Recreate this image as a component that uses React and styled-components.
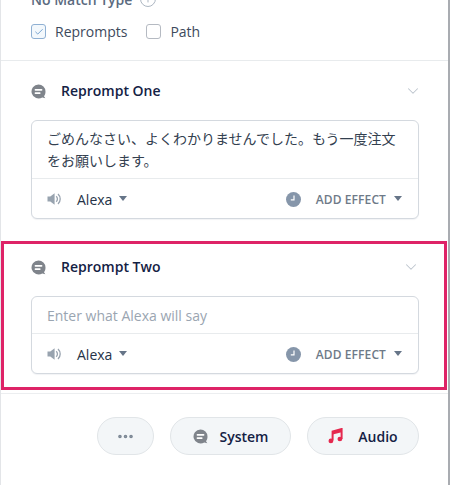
import styled, { createGlobalStyle } from 'styled-components';
import { Info, Check, ChevronDown, MoreHorizontal } from 'lucide-react';

const GlobalStyle = createGlobalStyle`
  html, body {
    margin: 0;
    padding: 0;
    background: #fff;
  }
  * {
    box-sizing: border-box;
  }
`;

const Panel = styled.div`
  width: 450px;
  height: 485px;
  overflow: hidden;
  background: #fff;
  border-left: 1px solid #e3e5e8;
  border-right: 2px solid #a9acb1;
  font-family: 'Open Sans', 'Noto Sans CJK JP', sans-serif;
  color: #132144;
`;

const TypeSection = styled.section`
  height: 62px;
  margin-top: -1px;
  padding: 0 0 0 30px;
  border-bottom: 1px solid #e8ebed;
  overflow: hidden;
`;

const TypeLabel = styled.div`
  display: flex;
  align-items: center;
  gap: 7px;
  height: 16px;
  margin-top: -8px;
  font-size: 14px;
  font-weight: 600;
  color: #5b6b7f;
  svg {
    color: #aab4bf;
  }
`;

const TypeRow = styled.div`
  display: flex;
  align-items: center;
  margin-top: 15px;
`;

const CheckOption = styled.label`
  display: flex;
  align-items: center;
  gap: 9px;
  margin-right: 19px;
  font-size: 14px;
  color: #3d4a5c;
`;

const CheckBox = styled.span`
  display: flex;
  align-items: center;
  justify-content: center;
  width: 15px;
  height: 15px;
  border-radius: 3px;
  border: 1px solid ${(p) => (p.$checked ? '#8fb0d3' : '#b5bac2')};
  background: ${(p) => (p.$checked ? '#f3f8fc' : '#fff')};
  color: #5d93c9;
`;

const Section = styled.section`
  height: ${(p) => (p.$highlight ? '149px' : '180px')};
  margin-right: ${(p) => (p.$highlight ? '1px' : '0')};
  padding: ${(p) => (p.$highlight ? '9px 27px 0 27px' : '16px 29px 0 30px')};
  border: ${(p) => (p.$highlight ? '3px solid #de2367' : 'none')};
`;

const SectionHeader = styled.div`
  display: flex;
  align-items: center;
  height: 28px;
  margin-bottom: 15px;
`;

const SectionTitle = styled.h3`
  flex: 1;
  margin: -1px 0 0 15px;
  font-size: 14px;
  font-weight: 600;
  color: #132144;
`;

const Chevron = styled(ChevronDown)`
  color: #bcc4cd;
  margin-right: -3px;
`;

const Card = styled.div`
  width: 388px;
  border: 1px solid #d4d9df;
  border-radius: 6px;
  background: #fff;
  box-shadow: 0 1px 1px rgba(30, 50, 80, 0.06);
`;

const CardText = styled.div`
  padding: ${(p) => (p.$placeholder ? '10px 15px 9px' : '7px 15px 4px')};
  height: ${(p) => (p.$placeholder ? '36px' : '57px')};
  font-size: 14px;
  line-height: ${(p) => (p.$placeholder ? '17px' : '22px')};
  color: ${(p) => (p.$placeholder ? '#9aa5b1' : '#33404f')};
`;

const CardFooter = styled.div`
  display: flex;
  align-items: center;
  height: 40px;
  padding: 1px 16px 0 15px;
  border-top: 1px solid #e8ebed;
`;

const VoiceName = styled.span`
  margin-left: 15px;
  font-size: 14px;
  color: #253247;
`;

const Caret = styled.span`
  width: 0;
  height: 0;
  margin-left: ${(p) => p.$gap || 7}px;
  margin-top: -2px;
  border-left: 4.5px solid transparent;
  border-right: 4.5px solid transparent;
  border-top: 5px solid #667588;
`;

const EffectGroup = styled.div`
  display: flex;
  align-items: center;
  margin-left: auto;
`;

const EffectLabel = styled.span`
  margin-left: 15px;
  font-size: 12px;
  font-weight: 600;
  letter-spacing: 0.1px;
  color: #6e7a88;
`;

const ButtonBar = styled.div`
  display: flex;
  justify-content: flex-end;
  gap: 16px;
  padding: 23px 29px 0 0;
  border-top: 1px solid #eceef0;
  margin-top: 3px;
`;

const PillButton = styled.button`
  display: flex;
  align-items: center;
  justify-content: center;
  gap: ${(p) => (p.$gap ? `${p.$gap}px` : '0')};
  width: ${(p) => p.$width}px;
  height: 38px;
  padding: 0;
  border: 1px solid #e1e5e8;
  border-radius: 20px;
  background: #f3f6f8;
  font-family: inherit;
  font-size: 14px;
  font-weight: 600;
  color: #132144;
  svg.dots {
    color: #7b8794;
  }
`;

function BubbleIcon() {
  return (
    <svg width="15" height="15" viewBox="0 0 15 15">
      <path
        d="M7.5 0.5a7 7 0 0 1 7 7c0 2-.6 3.6-1.5 4.8l1.3 2-3-.9A7 7 0 1 1 7.5 .5z"
        fill="#7f848b"
      />
      <rect x="3.6" y="5" width="7.8" height="1.8" rx=".8" fill="#fff" />
      <rect x="3.6" y="8.3" width="6" height="1.8" rx=".8" fill="#fff" />
    </svg>
  );
}

function SpeakerIcon() {
  return (
    <svg width="15" height="14" viewBox="0 0 15 14">
      <path d="M0.5 4.4h2.8L7.6 1.2v11.6L3.3 9.6H0.5z" fill="#98a3af" />
      <path d="M9.2 4.2a3.8 3.8 0 0 1 0 5.6" stroke="#98a3af" strokeWidth="1.3" fill="none" />
      <path d="M11 2a6.8 6.8 0 0 1 0 10" stroke="#98a3af" strokeWidth="1.3" fill="none" />
    </svg>
  );
}

function ClockIcon() {
  return (
    <svg width="15" height="15" viewBox="0 0 15 15">
      <circle cx="7.5" cy="7.5" r="7.5" fill="#8696aa" />
      <path d="M8 3.4v4.4H4.8" stroke="#fff" strokeWidth="1.2" fill="none" />
    </svg>
  );
}

function NoteIcon() {
  return (
    <svg width="15" height="16" viewBox="0 0 15 16">
      <path
        d="M4.6 12.6V3.4L13.6 1v10"
        stroke="#e5294f"
        strokeWidth="2"
        fill="none"
      />
      <path d="M4.6 3.4L13.6 1v3.2L4.6 6.4z" fill="#e5294f" />
      <ellipse cx="2.9" cy="12.9" rx="2.4" ry="2.3" fill="#e5294f" />
      <ellipse cx="11.9" cy="11" rx="2.4" ry="2.3" fill="#e5294f" />
    </svg>
  );
}

function RepromptCard({ text, placeholder }) {
  return (
    <Card>
      <CardText $placeholder={!text}>{text || placeholder}</CardText>
      <CardFooter>
        <SpeakerIcon />
        <VoiceName>Alexa</VoiceName>
        <Caret />
        <EffectGroup>
          <ClockIcon />
          <EffectLabel>ADD EFFECT</EffectLabel>
          <Caret $gap={8} />
        </EffectGroup>
      </CardFooter>
    </Card>
  );
}

export default function App() {
  return (
    <>
      <GlobalStyle />
      <Panel>
        <TypeSection>
          <TypeLabel>
            No Match Type
            <Info size={18} strokeWidth={1.3} />
          </TypeLabel>
          <TypeRow>
            <CheckOption>
              <CheckBox $checked>
                <Check size={10} strokeWidth={2} />
              </CheckBox>
              Reprompts
            </CheckOption>
            <CheckOption>
              <CheckBox />
              Path
            </CheckOption>
          </TypeRow>
        </TypeSection>
        <Section>
          <SectionHeader>
            <BubbleIcon />
            <SectionTitle>Reprompt One</SectionTitle>
            <Chevron size={18} strokeWidth={1.4} />
          </SectionHeader>
          <RepromptCard text="ごめんなさい、よくわかりませんでした。もう一度注文をお願いします。" />
        </Section>
        <Section $highlight>
          <SectionHeader>
            <BubbleIcon />
            <SectionTitle>Reprompt Two</SectionTitle>
            <Chevron size={18} strokeWidth={1.4} />
          </SectionHeader>
          <RepromptCard placeholder="Enter what Alexa will say" />
        </Section>
        <ButtonBar>
          <PillButton $width={57}>
            <MoreHorizontal className="dots" size={19} strokeWidth={2.6} />
          </PillButton>
          <PillButton $width={121} $gap={12}>
            <BubbleIcon />
            System
          </PillButton>
          <PillButton $width={112} $gap={15}>
            <NoteIcon />
            Audio
          </PillButton>
        </ButtonBar>
      </Panel>
    </>
  );
}
